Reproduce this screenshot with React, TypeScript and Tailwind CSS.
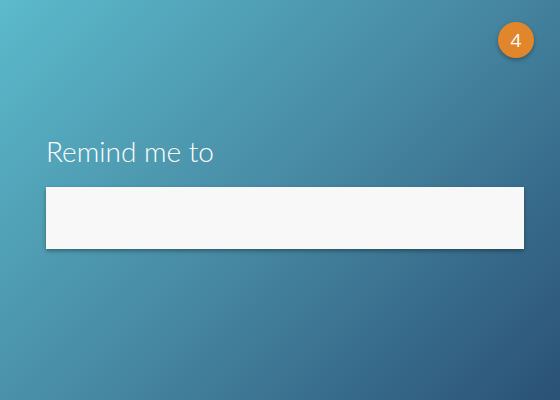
export default function App() {
  return (
    <div className="relative h-[400px] w-[560px] overflow-hidden bg-[linear-gradient(135deg,#5bbacb_0%,#4789a3_50%,#2a5176_100%)] font-['Lato',sans-serif]">
      <div className="absolute right-[26px] top-[22px] flex h-[36px] w-[36px] items-center justify-center rounded-full bg-[#e2862c] font-['Open_Sans',sans-serif] text-[19px] text-white shadow-[0_2px_4px_rgba(0,0,0,0.3)]">
        4
      </div>
      <div className="flex flex-col px-[46px] pt-[133px]">
        <h1 className="text-[28px] font-light leading-[36px] text-white">Remind me to</h1>
        <input
          type="text"
          className="mt-[18px] h-[62px] w-[478px] bg-[#f8f8f8] px-4 text-[20px] text-gray-700 shadow-[0_2px_4px_rgba(0,0,0,0.35)] outline-none"
        />
      </div>
    </div>
  )
}
